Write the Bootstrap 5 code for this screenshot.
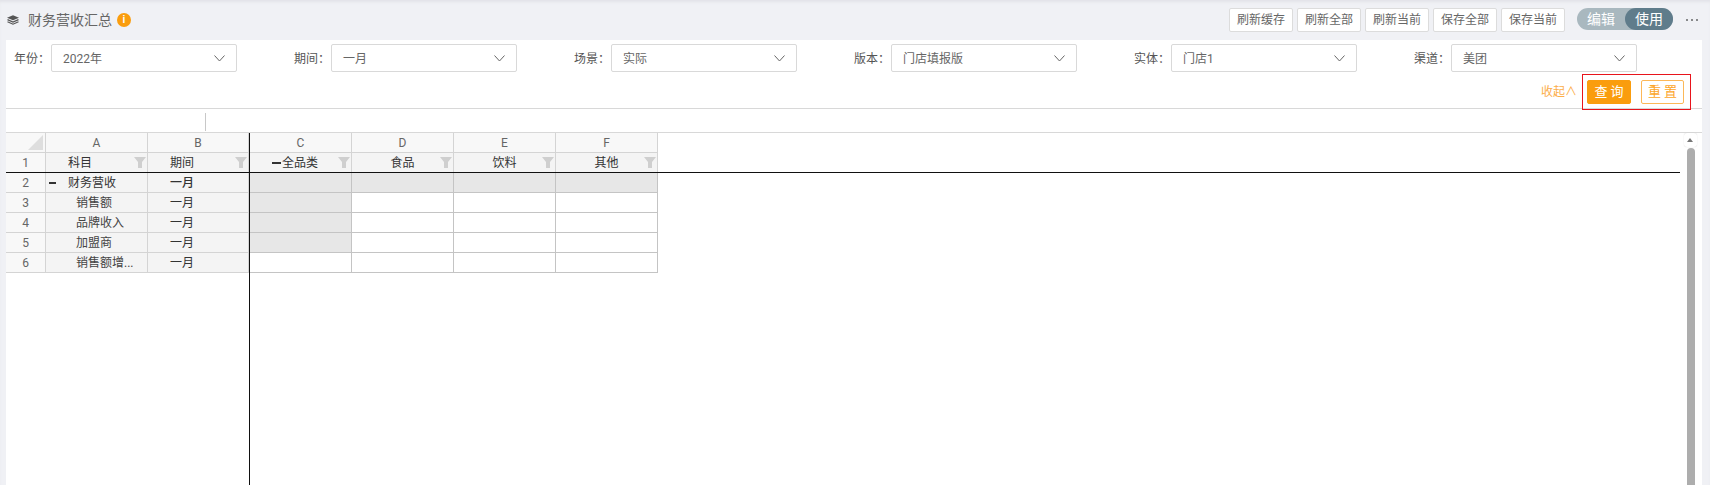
<!DOCTYPE html>
<html lang="zh">
<head>
<meta charset="utf-8">
<title>财务营收汇总</title>
<link href="https://cdn.jsdelivr.net/npm/bootstrap@5.3.0/dist/css/bootstrap.min.css" rel="stylesheet">
<style>
html,body{height:485px;overflow:hidden}
body{background:#f0f1f5;font:12px/1.5 Roboto,"Noto Sans CJK SC",sans-serif;color:#555;box-shadow:inset 0 3px 3px -1px #e2e3e8}
.topbar{height:40px;padding:8px 5px 0 7px}
.stack-ico{width:12px;height:10px;margin-right:9px}
.page-title{font-size:14px;color:#666}
.info-dot{width:14px;height:14px;border-radius:50%;background:#fa9d0e;color:#fff;font:700 10px/14px "Liberation Sans",sans-serif;text-align:center;margin-left:5px}
.tool-btn{height:24px;width:64px;padding:0;border:1px solid #dcdcdc;border-radius:2px;background:#fff;color:#666;font-size:12px;line-height:22px}
.mode-switch{height:22px;width:96px;border-radius:11px;background:#a9b8bf;color:#fff;font-size:14px;margin-left:12px}
.mode-off{width:48px;text-align:center;line-height:22px}
.mode-on{width:48px;text-align:center;line-height:22px;background:#5f7c8b;border-radius:11px}
.more-dots{width:32px;height:24px;padding-left:13px;gap:3px}
.more-dots i{width:2px;height:2px;background:#666;border-radius:50%}
.main-panel{background:#fff;margin:0 8px 0 6px;height:445px}
.filter-panel{height:69px;border-bottom:1px solid #d8d8d8}
.filter-row{padding:4px 0 0 0}
.filter-item{width:280px;flex:none}
.filter-label{width:45px;padding:1px 0 0 8px;color:#555;white-space:nowrap;line-height:28px;font-size:12px}
.fake-select{width:186px;height:28px;border:1px solid #d9d9d9;border-radius:2px;padding:1px 11px 0 11px;line-height:26px;color:#666}
.chev{width:11px;height:7px}
.query-row{height:36px;margin-top:1px}
.collapse-link{color:#fcae4a;margin-right:5px;line-height:36px}
.red-box{border:1px solid #e8141c;width:109px;height:36px;padding:5px 0 0 4px;margin-right:11px;gap:10px;z-index:1}
.q-btn{width:44px;height:24px;padding:0 0 0 3px;font-size:13px;line-height:22px;border-radius:2px;letter-spacing:3px;border:1px solid #fa9d0e}
.q-on{background:#fa9d0e;color:#fff}
.q-off{background:#fff;color:#fca52a;border-color:#fcb858;width:43px}
.formula-bar{height:24px;border-bottom:1px solid #d8d8d8;padding-top:4px}
.formula-sep{width:1px;height:18px;background:#c8c8c8;margin-left:199px}
.sheet-area{height:352px;display:grid;grid-template-columns:244px 1fr;grid-template-rows:40px 1fr;margin-right:22px}
.pane-top-l{border-right:1px solid #111;border-bottom:1px solid #111}
.pane-top-r{border-bottom:1px solid #111}
.pane-bot-l{border-right:1px solid #111}
.sheet{table-layout:fixed;border-collapse:separate;border-spacing:0;font-size:12px;color:#444}
.sheet td{border-right:1px solid #d4d4d4;border-bottom:1px solid #d4d4d4;padding:2px 0 0;text-align:center;height:20px;line-height:17px;overflow:hidden;white-space:nowrap;position:relative}
.sheet-l{width:243px}
.sheet-r{width:408px}
.w-rn{width:40px}.w-a{width:102px}.w-b{width:101px}
.w-cn{width:102px}
.col-head td{height:20px;background:#f8f8f8;color:#666}
.sub-head td{background:#f4f4f4;color:#333}
.sheet .sub-head td{border-bottom:0;height:19px}
.sheet .rn{background:#f8f8f8;color:#666}
.lft{background:#f4f4f4;color:#444}
.sheet .strong-cell{font-weight:500;color:#333}
.sheet .ind{text-align:left;padding-left:30px}
.sheet .ind0{text-align:left;padding-left:22px;color:#333}
.grey{background:#e7e7e7}
.data td{border-color:#c4c4c4}
.corner-tri{position:absolute;right:2px;bottom:2px;width:0;height:0;border-left:15px solid transparent;border-bottom:15px solid #dedede}
.funnel{position:absolute;right:1px;top:4px;width:12px;height:11px}
.tree-minus{position:absolute;left:3px;top:9px;width:7px;height:2px;background:#333}
.c-minus{display:inline-block;width:9px;height:2px;background:#333;vertical-align:3px;margin-right:1px}
.scroll-track{position:absolute;left:1684px;top:133px;width:16px;height:352px}
.scroll-up{position:absolute;left:0;top:0;width:13px;height:14px;background:#fff;border-radius:3px;box-shadow:0 0 1px #ccc}
.scroll-up::after{content:"";position:absolute;left:3px;top:5px;border-left:3.5px solid transparent;border-right:3.5px solid transparent;border-bottom:4px solid #777}
.scroll-thumb{position:absolute;left:3px;top:15px;width:8px;bottom:0;background:#adadad;border-radius:4px 4px 0 0}
</style>
</head>
<body>
<div class="topbar d-flex align-items-start">
  <div class="d-flex align-items-center" style="height:24px">
    <svg class="stack-ico" viewBox="0 0 12 10"><path d="M6 .2 12 2.7 6 5.2 0 2.7Z" fill="#555"/><path d="M.5 4.6 6 7 11.5 4.6M.5 6.8 6 9.2 11.5 6.8" fill="none" stroke="#555" stroke-width="1.2"/></svg>
    <span class="page-title">财务营收汇总</span>
    <span class="info-dot">i</span>
  </div>
  <div class="ms-auto d-flex gap-1 align-items-start">
    <button class="tool-btn">刷新缓存</button>
    <button class="tool-btn">刷新全部</button>
    <button class="tool-btn">刷新当前</button>
    <button class="tool-btn">保存全部</button>
    <button class="tool-btn">保存当前</button>
  </div>
  <div class="mode-switch d-flex">
    <div class="mode-off">编辑</div>
    <div class="mode-on">使用</div>
  </div>
  <div class="more-dots d-flex align-items-center"><i></i><i></i><i></i></div>
</div>
<div class="main-panel">
  <div class="filter-panel">
    <div class="filter-row d-flex">
      <div class="filter-item d-flex"><span class="filter-label">年份：</span><div class="fake-select d-flex justify-content-between align-items-center"><span>2022年</span><svg class="chev" viewBox="0 0 11 7"><path d="M.5 .5 5.5 6 10.5 .5" fill="none" stroke="#666"/></svg></div></div>
      <div class="filter-item d-flex"><span class="filter-label">期间：</span><div class="fake-select d-flex justify-content-between align-items-center"><span>一月</span><svg class="chev" viewBox="0 0 11 7"><path d="M.5 .5 5.5 6 10.5 .5" fill="none" stroke="#666"/></svg></div></div>
      <div class="filter-item d-flex"><span class="filter-label">场景：</span><div class="fake-select d-flex justify-content-between align-items-center"><span>实际</span><svg class="chev" viewBox="0 0 11 7"><path d="M.5 .5 5.5 6 10.5 .5" fill="none" stroke="#666"/></svg></div></div>
      <div class="filter-item d-flex"><span class="filter-label">版本：</span><div class="fake-select d-flex justify-content-between align-items-center"><span>门店填报版</span><svg class="chev" viewBox="0 0 11 7"><path d="M.5 .5 5.5 6 10.5 .5" fill="none" stroke="#666"/></svg></div></div>
      <div class="filter-item d-flex"><span class="filter-label">实体：</span><div class="fake-select d-flex justify-content-between align-items-center"><span>门店1</span><svg class="chev" viewBox="0 0 11 7"><path d="M.5 .5 5.5 6 10.5 .5" fill="none" stroke="#666"/></svg></div></div>
      <div class="filter-item d-flex"><span class="filter-label">渠道：</span><div class="fake-select d-flex justify-content-between align-items-center"><span>美团</span><svg class="chev" viewBox="0 0 11 7"><path d="M.5 .5 5.5 6 10.5 .5" fill="none" stroke="#666"/></svg></div></div>
    </div>
    <div class="query-row d-flex justify-content-end">
      <span class="collapse-link">收起∧</span>
      <div class="red-box d-flex">
        <button class="q-btn q-on">查询</button>
        <button class="q-btn q-off">重置</button>
      </div>
    </div>
  </div>
  <div class="formula-bar"><div class="formula-sep"></div></div>
  <div class="sheet-area">
    <div class="pane-top-l">
      <table class="sheet sheet-l">
        <colgroup><col class="w-rn"><col class="w-a"><col class="w-b"></colgroup>
        <tr class="col-head"><td><span class="corner-tri"></span></td><td>A</td><td>B</td></tr>
        <tr class="sub-head"><td class="rn">1</td><td class="ind0">科目<svg class="funnel" viewBox="0 0 12 11"><path d="M0 0H12L8 5V11H4V5Z" fill="#cfcfcf"/></svg></td><td class="ind0">期间<svg class="funnel" viewBox="0 0 12 11"><path d="M0 0H12L8 5V11H4V5Z" fill="#cfcfcf"/></svg></td></tr>
      </table>
    </div>
    <div class="pane-top-r">
      <table class="sheet sheet-r">
        <colgroup><col class="w-cn"><col class="w-cn"><col class="w-cn"><col class="w-cn"></colgroup>
        <tr class="col-head"><td>C</td><td>D</td><td>E</td><td>F</td></tr>
        <tr class="sub-head"><td class="ind0"><i class="c-minus"></i>全品类<svg class="funnel" viewBox="0 0 12 11"><path d="M0 0H12L8 5V11H4V5Z" fill="#cfcfcf"/></svg></td><td>食品<svg class="funnel" viewBox="0 0 12 11"><path d="M0 0H12L8 5V11H4V5Z" fill="#cfcfcf"/></svg></td><td>饮料<svg class="funnel" viewBox="0 0 12 11"><path d="M0 0H12L8 5V11H4V5Z" fill="#cfcfcf"/></svg></td><td>其他<svg class="funnel" viewBox="0 0 12 11"><path d="M0 0H12L8 5V11H4V5Z" fill="#cfcfcf"/></svg></td></tr>
      </table>
    </div>
    <div class="pane-bot-l">
      <table class="sheet sheet-l">
        <colgroup><col class="w-rn"><col class="w-a"><col class="w-b"></colgroup>
        <tr><td class="rn">2</td><td class="lft ind0"><i class="tree-minus"></i>财务营收</td><td class="lft ind0 strong-cell">一月</td></tr>
        <tr><td class="rn">3</td><td class="lft ind">销售额</td><td class="lft ind0">一月</td></tr>
        <tr><td class="rn">4</td><td class="lft ind">品牌收入</td><td class="lft ind0">一月</td></tr>
        <tr><td class="rn">5</td><td class="lft ind">加盟商</td><td class="lft ind0">一月</td></tr>
        <tr><td class="rn">6</td><td class="lft ind">销售额增...</td><td class="lft ind0">一月</td></tr>
      </table>
    </div>
    <div>
      <table class="sheet sheet-r data">
        <colgroup><col class="w-cn"><col class="w-cn"><col class="w-cn"><col class="w-cn"></colgroup>
        <tr><td class="grey"></td><td class="grey"></td><td class="grey"></td><td class="grey"></td></tr>
        <tr><td class="grey"></td><td></td><td></td><td></td></tr>
        <tr><td class="grey"></td><td></td><td></td><td></td></tr>
        <tr><td class="grey"></td><td></td><td></td><td></td></tr>
        <tr><td></td><td></td><td></td><td></td></tr>
      </table>
    </div>
  </div>
</div>
<div class="scroll-track"><div class="scroll-up"></div><div class="scroll-thumb"></div></div>
<script src="https://cdn.jsdelivr.net/npm/bootstrap@5.3.0/dist/js/bootstrap.bundle.min.js"></script>
</body>
</html>
